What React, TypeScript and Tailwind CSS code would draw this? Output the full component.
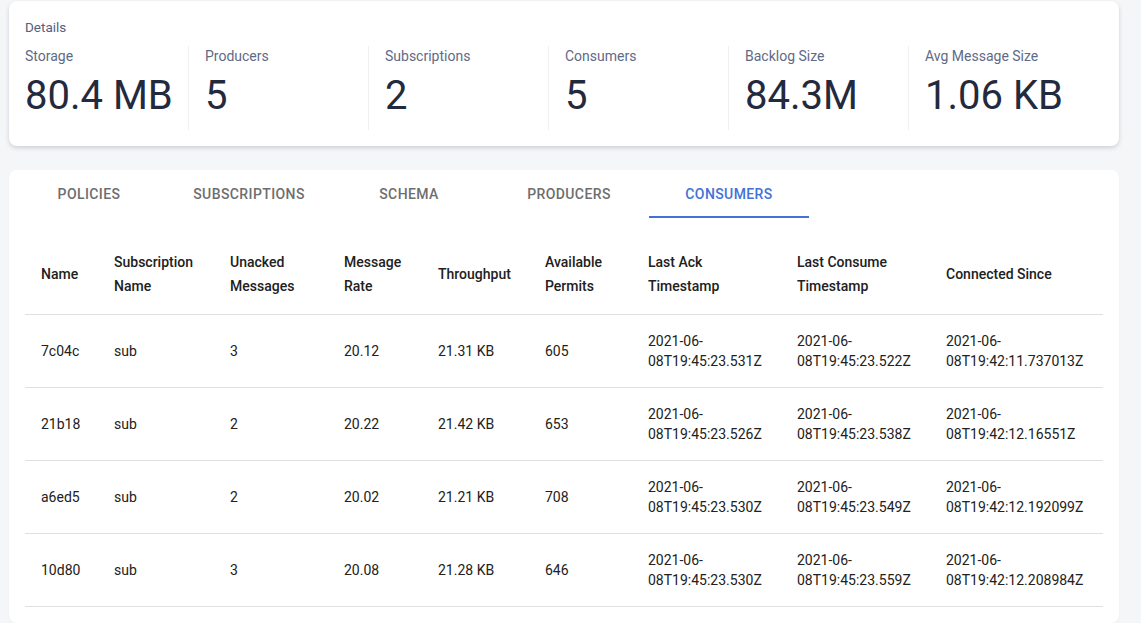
const stats = [
  { label: "Storage", value: "80.4 MB" },
  { label: "Producers", value: "5" },
  { label: "Subscriptions", value: "2" },
  { label: "Consumers", value: "5" },
  { label: "Backlog Size", value: "84.3M" },
  { label: "Avg Message Size", value: "1.06 KB" },
];

const tabs = ["Policies", "Subscriptions", "Schema", "Producers", "Consumers"];

const columns = [
  { title: ["Name"], width: "w-[73px]" },
  { title: ["Subscription", "Name"], width: "w-[116px]" },
  { title: ["Unacked", "Messages"], width: "w-[114px]" },
  { title: ["Message", "Rate"], width: "w-[94px]" },
  { title: ["Throughput"], width: "w-[107px]" },
  { title: ["Available", "Permits"], width: "w-[103px]" },
  { title: ["Last Ack", "Timestamp"], width: "w-[149px]" },
  { title: ["Last Consume", "Timestamp"], width: "w-[149px]" },
  { title: ["Connected Since"], width: "w-[173px]" },
];

const consumers = [
  {
    name: "7c04c",
    sub: "sub",
    unacked: 3,
    rate: "20.12",
    throughput: "21.31 KB",
    permits: 605,
    lastAck: "2021-06-08T19:45:23.531Z",
    lastConsume: "2021-06-08T19:45:23.522Z",
    since: "2021-06-08T19:42:11.737013Z",
  },
  {
    name: "21b18",
    sub: "sub",
    unacked: 2,
    rate: "20.22",
    throughput: "21.42 KB",
    permits: 653,
    lastAck: "2021-06-08T19:45:23.526Z",
    lastConsume: "2021-06-08T19:45:23.538Z",
    since: "2021-06-08T19:42:12.16551Z",
  },
  {
    name: "a6ed5",
    sub: "sub",
    unacked: 2,
    rate: "20.02",
    throughput: "21.21 KB",
    permits: 708,
    lastAck: "2021-06-08T19:45:23.530Z",
    lastConsume: "2021-06-08T19:45:23.549Z",
    since: "2021-06-08T19:42:12.192099Z",
  },
  {
    name: "10d80",
    sub: "sub",
    unacked: 3,
    rate: "20.08",
    throughput: "21.28 KB",
    permits: 646,
    lastAck: "2021-06-08T19:45:23.530Z",
    lastConsume: "2021-06-08T19:45:23.559Z",
    since: "2021-06-08T19:42:12.208984Z",
  },
];

// timestamps wrap right after the month, as in the original table
const Timestamp = ({ value }: { value: string }) => {
  const day = value.slice(0, 8);
  const rest = value.slice(8);
  return (
    <>
      <span className="block whitespace-nowrap">{day}</span>
      <span className="block whitespace-nowrap">{rest}</span>
    </>
  );
};

export default function App() {
  return (
    <div
      className="min-h-screen bg-[#f5f6f8] pl-[9px] pr-[22px] pt-px"
      style={{ fontFamily: "Roboto, 'Liberation Sans', sans-serif" }}
    >
      <div className="rounded-lg bg-white pt-4 pb-4 shadow-[0_2px_4px_rgba(30,40,60,0.18)]">
        <p className="px-4 text-[13.5px] leading-5 text-[#56607e]">Details</p>
        <div className="mt-[9px] flex">
          {stats.map((stat, i) => (
            <div
              key={stat.label}
              className={`pl-4 pb-[10px] ${
                i > 0 ? "w-[180px] border-l border-[#eef0f3]" : "w-[179px]"
              }`}
            >
              <p className="text-sm leading-5 text-[#5f6a86]">{stat.label}</p>
              <p className="mt-[6px] text-[40px] leading-[48px] text-[#232a3e]">
                {stat.value}
              </p>
            </div>
          ))}
        </div>
      </div>

      <div className="mt-6 rounded-lg bg-white px-4 pb-4 shadow-[0_1px_2px_rgba(30,40,60,0.04)]">
        <div className="-mx-4 flex">
          {tabs.map((tab) => {
            const active = tab === "Consumers";
            return (
              <button
                key={tab}
                className={`relative h-12 w-40 text-sm font-medium uppercase tracking-[0.4px] ${
                  active ? "text-[#4272d7]" : "text-[#6e6e6e]"
                }`}
              >
                {tab}
                {active && (
                  <span className="absolute bottom-0 left-0 h-[2px] w-full bg-[#4272d7]" />
                )}
              </button>
            );
          })}
        </div>

        <table className="mt-4 w-full table-fixed border-collapse text-sm text-[#212121]">
          <thead>
            <tr className="border-b border-[#e0e0e0]">
              {columns.map((col) => (
                <th
                  key={col.title.join(" ")}
                  className={`${col.width} p-4 text-left align-middle leading-6 font-medium`}
                >
                  {col.title.map((line) => (
                    <span key={line} className="block whitespace-nowrap">
                      {line}
                    </span>
                  ))}
                </th>
              ))}
            </tr>
          </thead>
          <tbody>
            {consumers.map((c) => (
              <tr key={c.name} className="border-b border-[#e0e0e0]">
                <td className="p-4 leading-5">{c.name}</td>
                <td className="p-4 leading-5">{c.sub}</td>
                <td className="p-4 leading-5">{c.unacked}</td>
                <td className="p-4 leading-5">{c.rate}</td>
                <td className="p-4 leading-5">{c.throughput}</td>
                <td className="p-4 leading-5">{c.permits}</td>
                <td className="p-4 leading-5">
                  <Timestamp value={c.lastAck} />
                </td>
                <td className="p-4 leading-5">
                  <Timestamp value={c.lastConsume} />
                </td>
                <td className="p-4 leading-5">
                  <Timestamp value={c.since} />
                </td>
              </tr>
            ))}
          </tbody>
        </table>
      </div>
    </div>
  );
}
